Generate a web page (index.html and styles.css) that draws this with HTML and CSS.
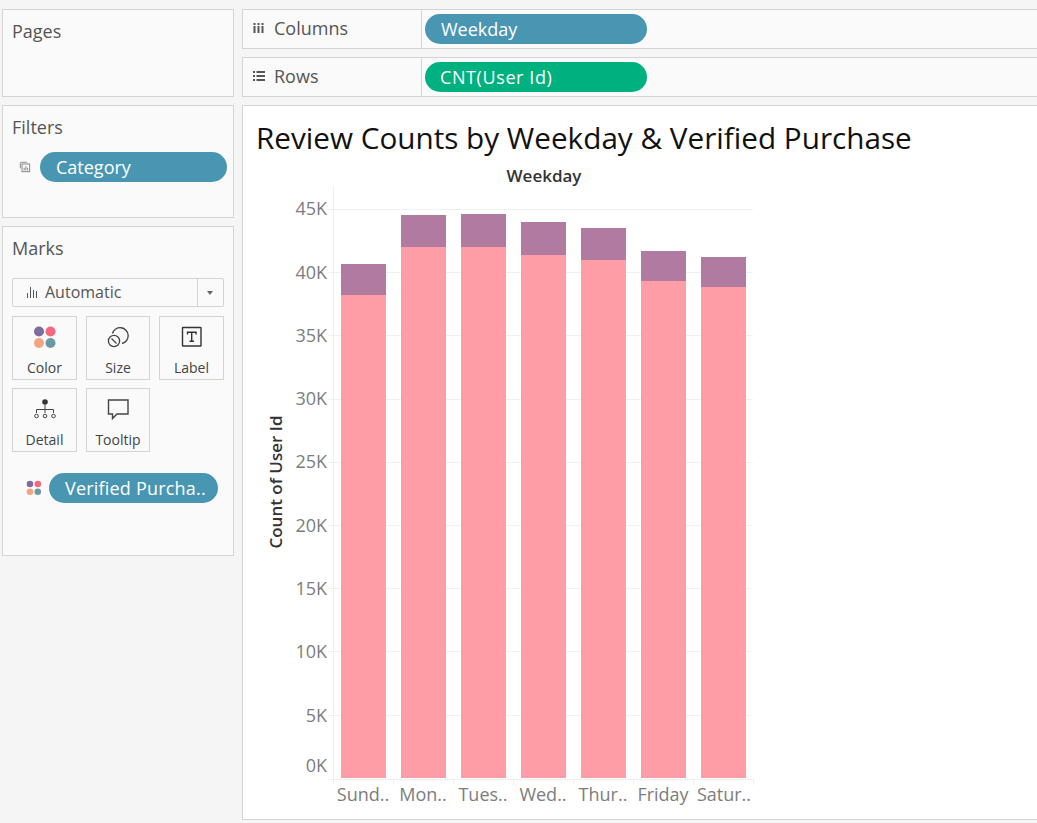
FILE: index.html
```html
<!DOCTYPE html>
<html lang="en">
  <head>
    <meta charset="UTF-8" />
    <title>Review Counts by Weekday</title>
    <link rel="stylesheet" href="styles.css">
  </head>
  <body>
    <div class="sidebar">
      <section class="card pagesCard"><h3 class="cardTitle">Pages</h3></section>

      <section class="card filtersCard">
        <h3 class="cardTitle">Filters</h3>
        <div class="pillRow filterRow">
          <svg class="pillIcon" width="12" height="12" viewBox="0 0 14 14" fill="none" stroke="#777" stroke-width="1">
            <path d="M1.5 8.5v-6a1 1 0 0 1 1-1h7" />
            <rect x="3.5" y="3.5" width="9" height="9" />
            <path d="M6 11V8M8 11V6M10 11V8" />
          </svg>
          <div class="pill blue categoryPill">Category</div>
        </div>
      </section>

      <section class="card marksCard">
        <h3 class="cardTitle">Marks</h3>
        <div class="markSelect">
          <div class="markSelectValue">
            <svg width="12" height="12" viewBox="0 0 12 12" stroke="#555" stroke-width="1">
              <path d="M1.5 12V7M4.5 12V1M7.5 12V4M10.5 12V5" />
            </svg>
            Automatic
          </div>
          <div class="markSelectArrow"></div>
        </div>
        <div class="markGrid">
          <div class="markBtn">
            <svg width="24" height="24" viewBox="0 0 24 24">
              <circle cx="6" cy="6.5" r="5" fill="#7f6b9c" />
              <circle cx="17.500" cy="6.5" r="5" fill="#f6687e" />
              <circle cx="6" cy="18" r="5" fill="#f3a57e" />
              <circle cx="17.500" cy="18" r="5" fill="#6b9aa6" />
            </svg>
            <span>Color</span>
          </div>
          <div class="markBtn">
            <svg width="24" height="24" viewBox="0 0 24 24" fill="none" stroke="#444" stroke-width="1.3">
              <path d="M6.5 8.5a8 8 0 1 1 9.5 10" />
              <circle cx="8" cy="16" r="5.6" />
              <path d="M5.5 13.5l5 5" />
            </svg>
            <span>Size</span>
          </div>
          <div class="markBtn">
            <svg width="24" height="24" viewBox="0 0 24 24" fill="none" stroke="#333" stroke-width="1.4">
              <rect x="2.500" y="2.500" width="18.500" height="18.500" rx="0.5" />
              <path d="M7.500 9.500V7.200H16V9.500M11.700 7.200v9M9.500 16.300H14" />
            </svg>
            <span>Label</span>
          </div>
          <div class="markBtn">
            <svg width="24" height="24" viewBox="0 0 24 24" fill="none" stroke="#444" stroke-width="1">
              <circle cx="12" cy="5" r="2.8" fill="#333" stroke="none" />
              <path d="M12 8v8M3.5 16v-3.5h17V16" />
              <circle cx="3.5" cy="19" r="1.8" />
              <circle cx="12" cy="19" r="1.8" />
              <circle cx="20.5" cy="19" r="1.8" />
            </svg>
            <span>Detail</span>
          </div>
          <div class="markBtn">
            <svg width="24" height="24" viewBox="0 0 24 24" fill="none" stroke="#444" stroke-width="1.4">
              <path d="M2.5 3h19.5v14H11l-4.500 4.500V17H2.500z" />
            </svg>
            <span>Tooltip</span>
          </div>
        </div>
        <div class="pillRow colorRow">
          <svg class="pillIcon" width="16" height="16" viewBox="0 0 16 16">
            <circle cx="4" cy="4" r="3.3" fill="#7f6b9c" />
            <circle cx="11.800" cy="4" r="3.300" fill="#f6687e" />
            <circle cx="4" cy="11.800" r="3.300" fill="#f3a57e" />
            <circle cx="11.800" cy="11.800" r="3.300" fill="#6b9aa6" />
          </svg>
          <div class="pill blue verifiedPill">Verified Purcha..</div>
        </div>
      </section>
    </div>

    <div class="workspace">
      <div class="shelf">
        <div class="shelfLabel">
          <svg width="12" height="12" viewBox="0 0 12 12" fill="#555">
            <rect x="0.500" y="1" width="2" height="2" /><rect x="0.500" y="4" width="2" height="7" />
            <rect x="4.500" y="1" width="2" height="2" /><rect x="4.500" y="4" width="2" height="7" />
            <rect x="8.500" y="1" width="2" height="2" /><rect x="8.500" y="4" width="2" height="7" />
          </svg>
          Columns
        </div>
        <div class="shelfBody"><div class="pill blue shelfPill">Weekday</div></div>
      </div>

      <div class="shelf">
        <div class="shelfLabel">
          <svg width="12" height="12" viewBox="0 0 12 12" fill="#555">
            <rect x="0" y="1" width="2" height="2" /><rect x="3.500" y="1" width="8.500" height="2" />
            <rect x="0" y="5" width="2" height="2" /><rect x="3.500" y="5" width="8.500" height="2" />
            <rect x="0" y="9" width="2" height="2" /><rect x="3.500" y="9" width="8.500" height="2" />
          </svg>
          Rows
        </div>
        <div class="shelfBody"><div class="pill green shelfPill cntPill">CNT(User Id)</div></div>
      </div>

      <section class="chartCard">
        <h1 class="chartTitle">Review Counts by Weekday &amp; Verified Purchase</h1>
        <svg class="chart" width="520" height="650" viewBox="243 165 520 650">
          <g class="grid">
            <path d="M333.500 186V780" />
            <path d="M328 209.500H753M328 272.500H753M328 335.500H753M328 399.500H753M328 462.500H753M328 525.500H753M328 588.500H753M328 651.500H753M328 715.500H753" />
            <path d="M328 779.500H753M333.500 779V785M393.500 779V785M453.500 779V785M513.500 779V785M573.500 779V785M633.500 779V785M693.500 779V785M753.500 779V785" />
          </g>

          <g class="bars">
            <rect class="purple" x="341" y="264" width="45" height="31" /><rect class="pink" x="341" y="295" width="45" height="483" />
            <rect class="purple" x="401" y="215" width="45" height="32" /><rect class="pink" x="401" y="247" width="45" height="531" />
            <rect class="purple" x="461" y="214" width="45" height="33" /><rect class="pink" x="461" y="247" width="45" height="531" />
            <rect class="purple" x="521" y="222" width="45" height="33" /><rect class="pink" x="521" y="255" width="45" height="523" />
            <rect class="purple" x="581" y="228" width="45" height="32" /><rect class="pink" x="581" y="260" width="45" height="518" />
            <rect class="purple" x="641" y="251" width="45" height="30" /><rect class="pink" x="641" y="281" width="45" height="497" />
            <rect class="purple" x="701" y="257" width="45" height="30" /><rect class="pink" x="701" y="287" width="45" height="491" />
          </g>

          <text class="axisTitle" x="544" y="182" text-anchor="middle">Weekday</text>
          <text class="axisTitle" transform="translate(282 482) rotate(-90)" text-anchor="middle">Count of User Id</text>

          <g class="tickText" text-anchor="end">
            <text x="327" y="215">45K</text>
            <text x="327" y="279">40K</text>
            <text x="327" y="342">35K</text>
            <text x="327" y="405">30K</text>
            <text x="327" y="468">25K</text>
            <text x="327" y="532">20K</text>
            <text x="327" y="595">15K</text>
            <text x="327" y="658">10K</text>
            <text x="327" y="722">5K</text>
            <text x="327" y="772">0K</text>
          </g>
          <g class="tickText" text-anchor="middle">
            <text x="363" y="801">Sund..</text>
            <text x="423" y="801">Mon..</text>
            <text x="483" y="801">Tues..</text>
            <text x="543" y="801">Wed..</text>
            <text x="603" y="801">Thur..</text>
            <text x="663" y="801">Friday</text>
            <text x="724" y="801">Satur..</text>
          </g>
        </svg>
      </section>
    </div>
  </body>
</html>
```

FILE: styles.css
```css
html,
body {
  margin: 0;
  padding: 0;
  height: 100%;
  overflow: hidden;
}

body {
  display: flex;
  gap: 8px;
  padding: 9px 0 0 2px;
  box-sizing: border-box;
  width: 1037px;
  height: 823px;
  background: #f5f5f5;
  font-family: "Open Sans", "Liberation Sans", sans-serif;
  color: #555;
}

.sidebar {
  flex: 0 0 232px;
  width: 232px;
  min-width: 0;
  display: flex;
  flex-direction: column;
  gap: 8px;
}

.card {
  box-sizing: border-box;
  background: #fafafa;
  border: 1px solid #d4d4d4;
  padding: 10px 6px 0 9px;
}

.pagesCard {
  height: 88px;
}

.filtersCard {
  height: 113px;
}

.marksCard {
  height: 330px;
}

.cardTitle {
  margin: 0;
  font-size: 18px;
  line-height: 22px;
  font-weight: 400;
  color: #555;
}

.pillRow {
  display: flex;
  align-items: center;
}

.filterRow {
  margin-top: 14px;
  padding-left: 7px;
  gap: 9px;
}

.colorRow {
  margin-top: 21px;
  padding-left: 14px;
  gap: 7px;
}

.pill {
  box-sizing: border-box;
  height: 30px;
  line-height: 30px;
  border-radius: 15px;
  color: #fff;
  font-size: 18px;
  padding-left: 16px;
  white-space: nowrap;
}

.blue {
  background: #4996b2;
}

.green {
  background: #00b180;
}

.categoryPill {
  width: 187px;
}

.verifiedPill {
  width: 169px;
  letter-spacing: 0.2px;
}

.shelfPill {
  width: 222px;
}

.cntPill {
  padding-left: 15px;
  letter-spacing: 0.6px;
}

.markSelect {
  display: flex;
  box-sizing: border-box;
  height: 29px;
  margin-top: 19px;
  width: 212px;
  background: #fafafa;
  border: 1px solid #d4d4d4;
  border-radius: 2px;
}

.markSelectValue {
  flex: 1;
  display: flex;
  align-items: center;
  gap: 7px;
  padding-left: 13px;
  padding-bottom: 2px;
  font-size: 16px;
  color: #555;
}

.markSelectArrow {
  flex: 0 0 25px;
  position: relative;
  border-left: 1px solid #d4d4d4;
}

.markSelectArrow::after {
  content: "";
  position: absolute;
  left: 9px;
  top: 12px;
  border-left: 3.5px solid transparent;
  border-right: 3.5px solid transparent;
  border-top: 4px solid #666;
}

.markGrid {
  display: grid;
  grid-template-columns: 65px 64px 65px;
  grid-auto-rows: 64px;
  column-gap: 9px;
  row-gap: 8px;
  margin-top: 9px;
}

.markBtn {
  box-sizing: border-box;
  border: 1px solid #d4d4d4;
  display: flex;
  flex-direction: column;
  align-items: center;
  padding-top: 8px;
  font-size: 14px;
  line-height: 18px;
  color: #444;
}

.markBtn span {
  margin-top: 10px;
}

.workspace {
  flex: 0 0 820px;
  min-width: 0;
  display: flex;
  flex-direction: column;
  gap: 8px;
}

.shelf {
  display: flex;
  box-sizing: border-box;
  height: 40px;
  background: #fafafa;
  border: 1px solid #d4d4d4;
}

.shelfLabel {
  flex: 0 0 179px;
  box-sizing: border-box;
  display: flex;
  align-items: center;
  gap: 9px;
  padding-left: 10px;
  padding-bottom: 2px;
  font-size: 18px;
  border-right: 1px solid #d4d4d4;
}

.shelfBody {
  flex: 1;
  display: flex;
  align-items: center;
  padding-left: 3px;
}

.chartCard {
  box-sizing: border-box;
  height: 715px;
  background: #fff;
  border: 1px solid #d4d4d4;
  padding-left: 13px;
}

.chartTitle {
  margin: 0;
  padding-top: 14px;
  height: 45px;
  font-size: 29.700px;
  line-height: 36px;
  font-weight: 400;
  color: #111;
  white-space: nowrap;
}

.chart {
  display: block;
  margin-left: -13px;
}

.grid path {
  fill: none;
  stroke: #f0f0f0;
  stroke-width: 1;
}

.purple {
  fill: #b07aa1;
}

.pink {
  fill: #ff9da7;
}

.axisTitle {
  font-size: 17px;
  font-weight: 600;
  fill: #333;
}

.tickText {
  font-size: 18px;
  fill: #7d7d7d;
}
```
